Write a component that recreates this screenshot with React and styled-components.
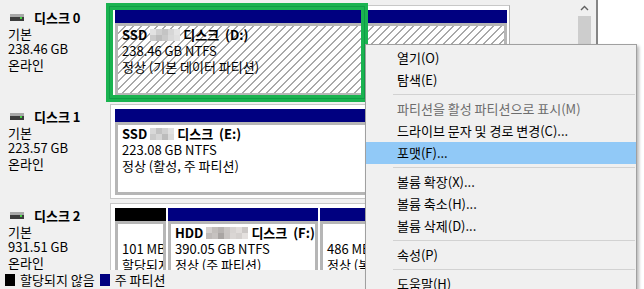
import styled, { createGlobalStyle } from 'styled-components';

const GlobalStyle = createGlobalStyle`
  html, body {
    margin: 0;
    padding: 0;
    background: #fff;
    overflow: hidden;
  }
  body {
    font-family: "Noto Sans CJK KR", "Noto Sans", sans-serif;
    font-size: 13px;
    color: #000;
  }
`;

const Screen = styled.div`
  position: relative;
  display: flex;
  width: 644px;
  height: 289px;
  overflow: hidden;
  background: #fff;
`;

const View = styled.div`
  display: flex;
  flex-direction: column;
  width: 576px;
  background: #f0f0f0;
`;

const Rows = styled.div`
  position: relative;
  height: 270px;
  padding-top: 2px;
  box-sizing: border-box;
  overflow: hidden;
`;

const DiskRow = styled.div`
  display: flex;
  height: 99px;
`;

const DiskLabel = styled.div`
  width: 110px;
  flex: none;
  box-sizing: border-box;
  padding: 8px 0 0 8px;
  line-height: 15.5px;
`;

const DiskTitle = styled.div`
  display: flex;
  align-items: center;
  gap: 10px;
  padding-left: 2px;
  font-weight: 700;
`;

const Volumes = styled.div`
  display: flex;
  gap: 2px;
  width: 400px;
  height: 95px;
  margin-top: 3px;
  box-sizing: border-box;
  padding: 4px 2px 3px 4px;
  background: #fff;
  border: 1px solid #c8c8c8;
  border-right-color: #b0b0b0;
`;

const Partition = styled.div`
  display: flex;
  flex-direction: column;
  flex: ${(p) => (p.$width ? `0 0 ${p.$width}px` : '1 1 0')};
  min-width: 0;
`;

const PartHead = styled.div`
  height: 13px;
  flex: none;
  background: ${(p) => (p.$unallocated ? '#000' : '#000080')};
`;

const PartBody = styled.div`
  flex: 1;
  border: 3px solid #b6b6b6;
  padding: 1px 4px;
  line-height: 16px;
  white-space: nowrap;
  overflow: hidden;
  background: ${(p) =>
    p.$hatched
      ? 'repeating-linear-gradient(135deg, #fff 0 4.6px, #a9a9a9 4.6px 5.66px)'
      : '#fff'};
`;

const PartName = styled.div`
  font-weight: 700;
  display: flex;
  align-items: center;
  white-space: pre;
`;

const Blur = styled.span`
  display: inline-grid;
  grid-template-columns: repeat(${(p) => p.$cols}, 6px);
  grid-auto-rows: 6px;
  margin: 0 3px;
`;

const BlurCell = styled.span`
  background: ${(p) => p.$c};
`;

const Legend = styled.div`
  display: flex;
  align-items: center;
  height: 19px;
  padding-left: 5px;
  gap: 5px;
`;

const Swatch = styled.span`
  width: 10px;
  height: 12px;
  background: ${(p) => p.$color};
`;

const LegendText = styled.span`
  line-height: 19px;
`;

const Scrollbar = styled.div`
  display: flex;
  flex-direction: column;
  width: 17px;
  background: #f0f0f0;
`;

const ScrollButton = styled.div`
  display: flex;
  align-items: center;
  justify-content: center;
  height: 16px;
`;

const Thumb = styled.div`
  height: 140px;
  margin: 0 2px;
  background: #cdcdcd;
`;

const Edge = styled.div`
  width: 3px;
  background: #f0f0f0;
  border-right: 2px solid #858585;
`;

const Selection = styled.div`
  position: absolute;
  left: 106px;
  top: 3px;
  width: 262px;
  height: 99px;
  box-sizing: border-box;
  border: 3px solid #1ab350;
  box-shadow: inset 0 0 0 1px #0f9d46, inset 0 0 0 4px #1ab350;
  pointer-events: none;
`;

const Menu = styled.div`
  position: absolute;
  left: 365px;
  top: 44px;
  width: 272px;
  box-sizing: border-box;
  padding: 2px 0;
  background: #f0f0f0;
  border: 1px solid #a0a0a0;
  box-shadow: 2px 2px 3px rgba(0, 0, 0, 0.28);
`;

const MenuItem = styled.div`
  height: 22px;
  line-height: 22px;
  padding-left: 31px;
  white-space: nowrap;
  color: ${(p) => (p.$disabled ? '#6d6d6d' : '#000')};
  background: ${(p) => (p.$active ? '#91c9f7' : 'transparent')};
`;

const MenuSep = styled.div`
  height: 7px;
  display: flex;
  align-items: center;
  margin: 0 1px 0 27px;

  &::after {
    content: '';
    flex: 1;
    height: 1px;
    background: #d2d2d2;
  }
`;

const DiskIcon = () => (
  <svg width="14" height="7" viewBox="0 0 14 7">
    <rect x="0" y="0" width="14" height="3" fill="#a8a8a8" />
    <rect x="0" y="3" width="14" height="4" fill="#3c3c3c" />
    <rect x="10" y="3" width="2" height="2" fill="#45d043" />
  </svg>
);

const Mosaic = ({ cells }) => (
  <Blur $cols={cells.length / 2}>
    {cells.map((c, i) => (
      <BlurCell key={i} $c={c} />
    ))}
  </Blur>
);

const disks = [
  {
    name: '디스크 0',
    size: '238.46 GB',
    parts: [
      {
        label: 'SSD',
        blur: ['#e2e2e2', '#cfcfcf', '#c4c4c4', '#d6d6d6', '#e4e4e4', '#cbcbcb', '#bdbdbd', '#c9c9c9', '#d9d9d9', '#e0e0e0'],
        drive: '디스크  (D:)',
        size: '238.46 GB NTFS',
        status: '정상 (기본 데이터 파티션)',
        hatched: true
      }
    ]
  },
  {
    name: '디스크 1',
    size: '223.57 GB',
    parts: [
      {
        label: 'SSD',
        blur: ['#d8d8d8', '#c2c2c2', '#d0d0d0', '#e0e0e0', '#cacaca', '#d6d6d6', '#bcbcbc', '#dadada'],
        drive: '디스크  (E:)',
        size: '223.08 GB NTFS',
        status: '정상 (활성, 주 파티션)'
      }
    ]
  },
  {
    name: '디스크 2',
    size: '931.51 GB',
    parts: [
      { width: 51, unallocated: true, size: '101 MB', status: '할당되지 않음' },
      {
        width: 150,
        label: 'HDD',
        blur: ['#d3cfcd', '#c2bebb', '#b7b3b1', '#c9c5c3', '#d7d3d1', '#e0dcda', '#ccc8c6', '#bebab8', '#c6c2c0', '#a9a5a3', '#c8c4c2', '#dad6d4', '#d4d0ce', '#e4e0de'],
        drive: '디스크  (F:)',
        size: '390.05 GB NTFS',
        status: '정상 (주 파티션)'
      },
      { size: '486 MB', status: '정상 (복구 파티션)' }
    ]
  }
];

const menu = [
  { text: '열기(O)' },
  { text: '탐색(E)' },
  { sep: true },
  { text: '파티션을 활성 파티션으로 표시(M)', disabled: true },
  { text: '드라이브 문자 및 경로 변경(C)...' },
  { text: '포맷(F)...', active: true },
  { sep: true },
  { text: '볼륨 확장(X)...' },
  { text: '볼륨 축소(H)...' },
  { text: '볼륨 삭제(D)...' },
  { sep: true },
  { text: '속성(P)' },
  { sep: true },
  { text: '도움말(H)' }
];

const App = () => (
  <Screen>
    <GlobalStyle />
    <View>
      <Rows>
        {disks.map((disk) => (
          <DiskRow key={disk.name}>
            <DiskLabel>
              <DiskTitle>
                <DiskIcon />
                {disk.name}
              </DiskTitle>
              <div>기본</div>
              <div>{disk.size}</div>
              <div>온라인</div>
            </DiskLabel>
            <Volumes>
              {disk.parts.map((part, i) => (
                <Partition key={i} $width={part.width}>
                  <PartHead $unallocated={part.unallocated} />
                  <PartBody $hatched={part.hatched}>
                    {part.label ? (
                      <PartName>
                        {part.label}
                        <Mosaic cells={part.blur} />
                        {part.drive}
                      </PartName>
                    ) : (
                      <div>&nbsp;</div>
                    )}
                    <div>{part.size}</div>
                    <div>{part.status}</div>
                  </PartBody>
                </Partition>
              ))}
            </Volumes>
          </DiskRow>
        ))}
        <Selection />
      </Rows>
      <Legend>
        <Swatch $color="#000" />
        <LegendText>할당되지 않음</LegendText>
        <Swatch $color="#000080" />
        <LegendText>주 파티션</LegendText>
      </Legend>
    </View>
    <Scrollbar>
      <ScrollButton>
        <svg width="9" height="6" viewBox="0 0 9 6">
          <path d="M1 5 L4.5 1.5 L8 5" fill="none" stroke="#606060" strokeWidth="1.4" />
        </svg>
      </ScrollButton>
      <Thumb />
    </Scrollbar>
    <Edge />
    <Menu>
      {menu.map((item, i) =>
        item.sep ? (
          <MenuSep key={i} />
        ) : (
          <MenuItem key={i} $disabled={item.disabled} $active={item.active}>
            {item.text}
          </MenuItem>
        )
      )}
    </Menu>
  </Screen>
);

export default App;
